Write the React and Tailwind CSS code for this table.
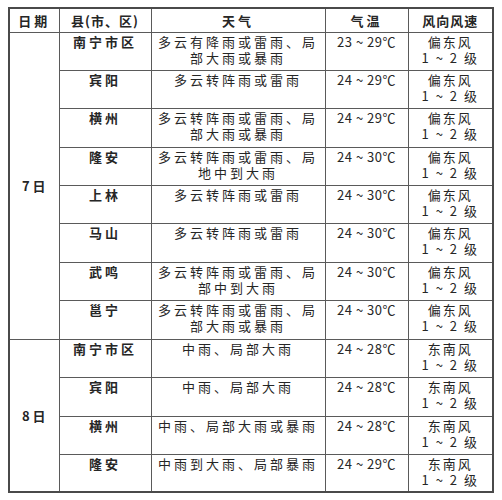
import React from 'react';

const rows7 = [
  { county: '南宁市区', weather: ['多云有降雨或雷雨、局', '部大雨或暴雨'], temp: '23 ~ 29℃', wind: '偏东风', h: 'h-[38px]' },
  { county: '宾阳', weather: ['多云转阵雨或雷雨'], temp: '24 ~ 29℃', wind: '偏东风', h: 'h-[38px]' },
  { county: '横州', weather: ['多云转阵雨或雷雨、局', '部大雨或暴雨'], temp: '24 ~ 29℃', wind: '偏东风', h: 'h-[39px]' },
  { county: '隆安', weather: ['多云转阵雨或雷雨、局', '地中到大雨'], temp: '24 ~ 30℃', wind: '偏东风', h: 'h-[38px]' },
  { county: '上林', weather: ['多云转阵雨或雷雨'], temp: '24 ~ 30℃', wind: '偏东风', h: 'h-[38px]' },
  { county: '马山', weather: ['多云转阵雨或雷雨'], temp: '24 ~ 30℃', wind: '偏东风', h: 'h-[39px]' },
  { county: '武鸣', weather: ['多云转阵雨或雷雨、局', '部中到大雨'], temp: '24 ~ 30℃', wind: '偏东风', h: 'h-[38px]' },
  { county: '邕宁', weather: ['多云转阵雨或雷雨、局', '部大雨或暴雨'], temp: '24 ~ 30℃', wind: '偏东风', h: 'h-[39px]' },
];

const rows8 = [
  { county: '南宁市区', weather: ['中雨、局部大雨'], temp: '24 ~ 28℃', wind: '东南风', h: 'h-[38px]' },
  { county: '宾阳', weather: ['中雨、局部大雨'], temp: '24 ~ 28℃', wind: '东南风', h: 'h-[39px]' },
  { county: '横州', weather: ['中雨、局部大雨或暴雨'], temp: '24 ~ 28℃', wind: '东南风', h: 'h-[38px]' },
  { county: '隆安', weather: ['中雨到大雨、局部暴雨'], temp: '24 ~ 29℃', wind: '东南风', h: 'h-[38px]' },
];

const cell = 'border border-[#5a5a5a] align-top text-center pt-px leading-[16px]';

function Group({ day, rows }) {
  return rows.map((r, i) => (
    <tr key={r.county + i} className={r.h}>
      {i === 0 && (
        <td rowSpan={rows.length} className="border border-[#5a5a5a] align-middle text-center font-bold tracking-[3px] pl-[2px]">
          {day}
        </td>
      )}
      <td className={cell + ' font-bold tracking-[3px]'}>{r.county}</td>
      <td className={cell + ' tracking-[3px]'}>
        {r.weather.map((w) => (
          <div key={w}>{w}</div>
        ))}
      </td>
      <td className={cell + ' tracking-[0.5px]'}>{r.temp}</td>
      <td className={cell + ' tracking-[2px]'}>
        <div>{r.wind}</div>
        <div>1 ~ 2 级</div>
      </td>
    </tr>
  ));
}

export default function App() {
  return (
    <div className="w-[502px] h-[500px] bg-white pl-2 pt-[7px] text-[#262626] text-[13px] font-['Noto_Sans_CJK_SC',sans-serif]">
      <table className="table-fixed border-collapse w-[484px] border-2 border-[#4a4a4a]">
        <colgroup>
          <col className="w-[50px]" />
          <col className="w-[92px]" />
          <col className="w-[174px]" />
          <col className="w-[83px]" />
          <col className="w-[85px]" />
        </colgroup>
        <thead>
          <tr className="h-[24px] font-bold">
            <th className="border border-[#5a5a5a] tracking-[3px] font-bold">日期</th>
            <th className="border border-[#5a5a5a] font-bold tracking-[1px]">县(市、区)</th>
            <th className="border border-[#5a5a5a] font-bold tracking-[3px]">天气</th>
            <th className="border border-[#5a5a5a] font-bold tracking-[3px]">气温</th>
            <th className="border border-[#5a5a5a] font-bold tracking-[1px]">风向风速</th>
          </tr>
        </thead>
        <tbody>
          <Group day="7日" rows={rows7} />
          <Group day="8日" rows={rows8} />
        </tbody>
      </table>
    </div>
  );
}
